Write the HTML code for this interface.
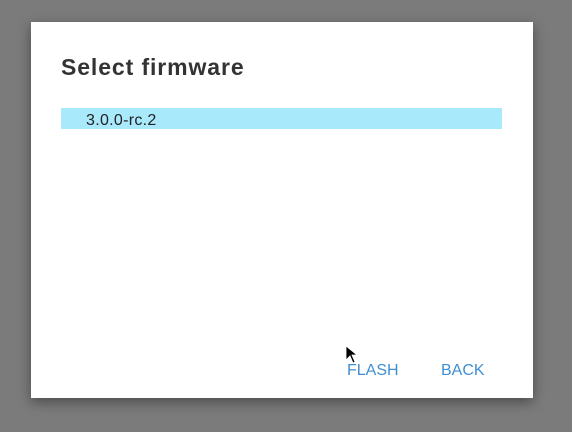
<!DOCTYPE html><html><head><style>
body{margin:0;width:572px;height:432px;background:#7b7b7b;position:relative;overflow:hidden;font-family:"Liberation Sans",sans-serif}
.d{position:absolute;left:31px;top:22px;width:502px;height:376px;background:#fff;box-shadow:0 4px 12px rgba(0,0,0,.4)}
.t{position:absolute;left:30px;top:32px;font-size:23px;font-weight:bold;color:#333;letter-spacing:0.9px}
.r{position:absolute;left:30px;top:86px;width:441px;height:21px;background:#a8e9fb;font-size:16px;color:#222;line-height:25px}
.r span{padding-left:25px;letter-spacing:0.3px}
.b{position:absolute;top:340px;font-size:16px;color:#3f8fd2}
</style></head><body>
<div class="d">
<div class="t">Select firmware</div>
<div class="r"><span>3.0.0-rc.2</span></div>
<div class="b" style="left:316px">FLASH</div>
<div class="b" style="left:410px">BACK</div>
</div>
<svg style="position:absolute;left:345px;top:345px" width="14" height="20"><path d="M1 1 L1 15 L5 11 L8 18 L10 17 L7 10 L12 10 Z" fill="#000" stroke="#fff" stroke-width="0.8"/></svg>
</body></html>
